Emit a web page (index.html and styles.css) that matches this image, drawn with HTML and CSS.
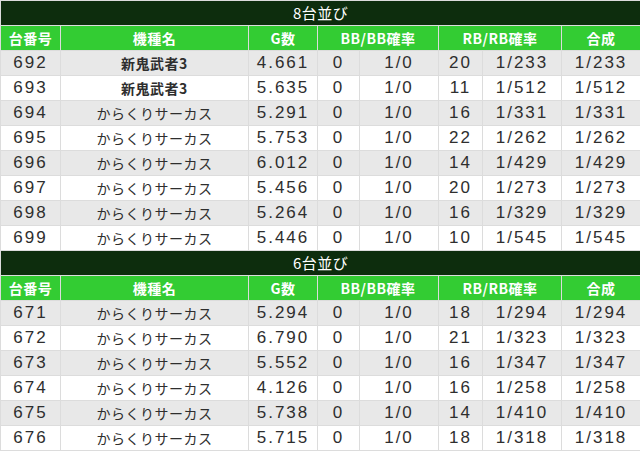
FILE: index.html
```html
<!DOCTYPE html>
<html lang="ja">
<head>
<meta charset="utf-8">
<link rel="stylesheet" href="styles.css">
</head>
<body>
<table class="data">
  <colgroup>
    <col class="c-no"><col class="c-name"><col class="c-g"><col class="c-bb"><col class="c-bbr"><col class="c-rb"><col class="c-rbr"><col class="c-sum">
  </colgroup>
  <tbody>
    <tr class="title"><td colspan="8">8台並び</td></tr>
    <tr class="head"><td>台番号</td><td>機種名</td><td>G数</td><td colspan="2">BB/BB確率</td><td colspan="2">RB/RB確率</td><td>合成</td></tr>
    <tr class="odd"><td>692</td><td class="nm b">新鬼武者3</td><td>4.661</td><td>0</td><td>1/0</td><td>20</td><td>1/233</td><td>1/233</td></tr>
    <tr><td>693</td><td class="nm b">新鬼武者3</td><td>5.635</td><td>0</td><td>1/0</td><td>11</td><td>1/512</td><td>1/512</td></tr>
    <tr class="odd"><td>694</td><td class="nm">からくりサーカス</td><td>5.291</td><td>0</td><td>1/0</td><td>16</td><td>1/331</td><td>1/331</td></tr>
    <tr><td>695</td><td class="nm">からくりサーカス</td><td>5.753</td><td>0</td><td>1/0</td><td>22</td><td>1/262</td><td>1/262</td></tr>
    <tr class="odd"><td>696</td><td class="nm">からくりサーカス</td><td>6.012</td><td>0</td><td>1/0</td><td>14</td><td>1/429</td><td>1/429</td></tr>
    <tr><td>697</td><td class="nm">からくりサーカス</td><td>5.456</td><td>0</td><td>1/0</td><td>20</td><td>1/273</td><td>1/273</td></tr>
    <tr class="odd"><td>698</td><td class="nm">からくりサーカス</td><td>5.264</td><td>0</td><td>1/0</td><td>16</td><td>1/329</td><td>1/329</td></tr>
    <tr><td>699</td><td class="nm">からくりサーカス</td><td>5.446</td><td>0</td><td>1/0</td><td>10</td><td>1/545</td><td>1/545</td></tr>
    <tr class="title"><td colspan="8">6台並び</td></tr>
    <tr class="head"><td>台番号</td><td>機種名</td><td>G数</td><td colspan="2">BB/BB確率</td><td colspan="2">RB/RB確率</td><td>合成</td></tr>
    <tr class="odd"><td>671</td><td class="nm">からくりサーカス</td><td>5.294</td><td>0</td><td>1/0</td><td>18</td><td>1/294</td><td>1/294</td></tr>
    <tr><td>672</td><td class="nm">からくりサーカス</td><td>6.790</td><td>0</td><td>1/0</td><td>21</td><td>1/323</td><td>1/323</td></tr>
    <tr class="odd"><td>673</td><td class="nm">からくりサーカス</td><td>5.552</td><td>0</td><td>1/0</td><td>16</td><td>1/347</td><td>1/347</td></tr>
    <tr><td>674</td><td class="nm">からくりサーカス</td><td>4.126</td><td>0</td><td>1/0</td><td>16</td><td>1/258</td><td>1/258</td></tr>
    <tr class="odd"><td>675</td><td class="nm">からくりサーカス</td><td>5.738</td><td>0</td><td>1/0</td><td>14</td><td>1/410</td><td>1/410</td></tr>
    <tr><td>676</td><td class="nm">からくりサーカス</td><td>5.715</td><td>0</td><td>1/0</td><td>18</td><td>1/318</td><td>1/318</td></tr>
  </tbody>
</table>
</body>
</html>
```
FILE: styles.css
```css
html, body {
  margin: 0;
  padding: 0;
  background: #ffffff;
}
.data {
  width: 640px;
  table-layout: fixed;
  border-collapse: collapse;
  font-family: "Liberation Sans", Arial, sans-serif;
  color: #2e2e2e;
}
.c-no { width: 60px; }
.c-name { width: 188px; }
.c-g { width: 69px; }
.c-bb { width: 42px; }
.c-bbr { width: 79px; }
.c-rb { width: 44px; }
.c-rbr { width: 79px; }
.c-sum { width: 79px; }
.data td {
  height: 24px;
  padding: 0;
  border: 1px solid #dcdcdc;
  text-align: center;
  vertical-align: middle;
  font-size: 17px;
  letter-spacing: 2px;
  line-height: 24px;
  white-space: nowrap;
  overflow: hidden;
}
.data tr.odd td {
  background: #e8e8e8;
}
.data td.nm {
  font-family: "Noto Sans CJK JP", sans-serif;
  font-size: 14px;
  letter-spacing: 0.5px;
}
.data td.b {
  font-weight: bold;
}
.data tr.title td {
  background: #0d2d0d;
  color: #ffffff;
  font-family: "Noto Sans CJK JP", sans-serif;
  font-size: 15px;
  letter-spacing: 0.5px;
}
.data tr.head td {
  background: #33cc33;
  color: #ffffff;
  font-family: "Noto Sans CJK JP", sans-serif;
  font-weight: bold;
  font-size: 14px;
  letter-spacing: 0.5px;
}
```
